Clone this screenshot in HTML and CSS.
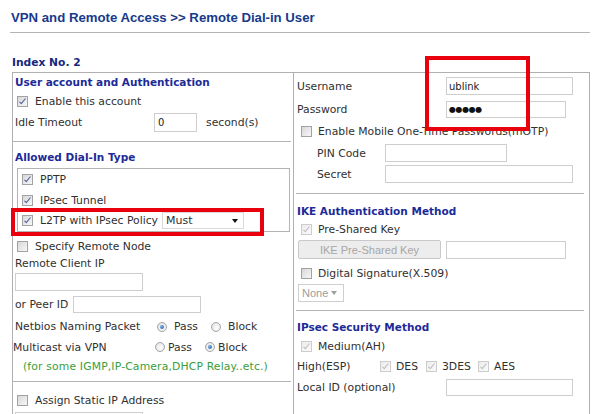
FILE: index.html
```html
<!DOCTYPE html>
<html lang="en">
<head>
    <meta charset="UTF-8">
    <title>Remote Dial-in User</title>
    <link rel="stylesheet" href="styles.css">
</head>
<body>
<div class="page">
    <h1 class="title">VPN and Remote Access &gt;&gt; Remote Dial-in User</h1>
    <div class="index">Index No. 2</div>

    <div class="panel">
        <div class="col-left">
            <div class="sec sec-account">
                <div class="head">User account and Authentication</div>
                <div class="row r-enable"><span class="cb on"></span>Enable this account</div>
                <div class="row r-idle">
                    <span class="lbl w-idle">Idle Timeout</span>
                    <span class="field f-idle">0</span>
                    <span class="unit">second(s)</span>
                </div>
            </div>

            <div class="sec sec-dial">
                <div class="head h-dial">Allowed Dial-In Type</div>
                <div class="typebox">
                    <div class="row tb-row tb-1"><span class="cb on"></span>PPTP</div>
                    <div class="row tb-row tb-2"><span class="cb on"></span>IPsec Tunnel</div>
                    <div class="row tb-row tb-3">
                        <span class="cb on"></span>L2TP with IPsec Policy
                        <span class="select s-must">Must</span>
                    </div>
                </div>
                <div class="row r-specify"><span class="cb"></span>Specify Remote Node</div>
                <div class="row r-label">Remote Client IP</div>
                <div class="row r-client"><span class="field f-client"></span></div>
                <div class="row r-peer">
                    <span class="lbl w-peer">or Peer ID</span>
                    <span class="field f-peer"></span>
                </div>
                <div class="row r-netbios">
                    <span class="lbl w-radio">Netbios Naming Packet</span>
                    <span class="opt opt-wide o-n1"><span class="rd on"></span>Pass</span>
                    <span class="opt opt-wide"><span class="rd"></span>Block</span>
                </div>
                <div class="row r-multi">
                    <span class="lbl w-radio">Multicast via VPN</span>
                    <span class="opt opt-tight o-m1"><span class="rd"></span>Pass</span>
                    <span class="opt opt-tight"><span class="rd on"></span>Block</span>
                </div>
                <div class="row r-note">(for some IGMP,IP-Camera,DHCP Relay..etc.)</div>
            </div>

            <div class="sec sec-static">
                <div class="row r-assign"><span class="cb"></span>Assign Static IP Address</div>
                <div class="row r-static"><span class="field f-client"></span></div>
            </div>
        </div>

        <div class="col-right">
            <div class="rsec rsec-user">
                <div class="row r-user">
                    <span class="lbl w-right">Username</span>
                    <span class="field f-user">ublink</span>
                </div>
                <div class="row r-pass">
                    <span class="lbl w-right">Password</span>
                    <span class="field f-pass"><span class="dots">●●●●●</span></span>
                </div>
                <div class="row r-otp"><span class="cb"></span>Enable Mobile One-Time Passwords(mOTP)</div>
                <div class="row r-pin">
                    <span class="lbl w-pin">PIN Code</span>
                    <span class="field f-pin"></span>
                </div>
                <div class="row r-secret">
                    <span class="lbl w-pin">Secret</span>
                    <span class="field f-secret"></span>
                </div>
            </div>

            <div class="rsec rsec-ike">
                <div class="head">IKE Authentication Method</div>
                <div class="row r-psk"><span class="cb on off"></span>Pre-Shared Key</div>
                <div class="row r-btn">
                    <span class="btn">IKE Pre-Shared Key</span>
                    <span class="field f-key"></span>
                </div>
                <div class="row r-digital"><span class="cb"></span>Digital Signature(X.509)</div>
                <div class="row r-none"><span class="select s-none">None</span></div>
            </div>

            <div class="rsec rsec-ipsec">
                <div class="head">IPsec Security Method</div>
                <div class="row r-medium"><span class="cb on off"></span>Medium(AH)</div>
                <div class="row r-high">
                    <span class="lbl w-high">High(ESP)</span>
                    <span class="esp esp-1"><span class="cb on off"></span>DES</span>
                    <span class="esp esp-2"><span class="cb on off"></span>3DES</span>
                    <span class="esp"><span class="cb on off"></span>AES</span>
                </div>
                <div class="row r-local">
                    <span class="lbl w-right">Local ID (optional)</span>
                    <span class="field f-local"></span>
                </div>
            </div>
        </div>
    </div>

    <!-- red annotation frames drawn over the form -->
    <div class="mark mark-l2tp"></div>
    <div class="mark mark-user"></div>
</div>
</body>
</html>
```

FILE: styles.css
```css
body {
    margin: 0;
    background: #fff;
    font-family: "DejaVu Sans", Verdana, sans-serif;
    font-size: 10.8px;
    color: #303030;
}
.page {
    position: relative;
    width: 600px;
    height: 414px;
    overflow: hidden;
}
.title {
    margin: 10px 0 0 10px;
    padding: 0 0 6px 1px;
    width: 579px;
    font: bold 13.2px/16px "Liberation Sans", Arial, sans-serif;
    color: #173a8c;
    border-bottom: 1px solid #b4b4b4;
}
.index {
    margin: 23px 0 0 12px;
    height: 16px;
    font: bold 10.7px/14px "DejaVu Sans", Verdana, sans-serif;
    color: #15287e;
}
.panel {
    margin-left: 12px;
    width: 576px;
    height: 400px;
    display: grid;
    grid-template-columns: 280px 296px;
    border: 1px solid #b0b0b0;
    border-bottom: none;
}
.col-right {
    border-left: 1px solid #b0b0b0;
}

/* generic rows */
.row {
    display: flex;
    align-items: center;
    height: 20px;
    white-space: nowrap;
}
.head {
    display: flex;
    align-items: center;
    height: 18px;
    padding-left: 2px;
    font: bold 10.5px "DejaVu Sans", Verdana, sans-serif;
    color: #1c2a98;
    white-space: nowrap;
}
.lbl { flex: none; }

/* form controls */
.field {
    box-sizing: border-box;
    display: flex;
    align-items: center;
    flex: none;
    height: 18px;
    padding-left: 2px;
    border: 1px solid #cecece;
    background: #fff;
    font-size: 10px;
    color: #222;
}
.cb {
    position: relative;
    box-sizing: border-box;
    flex: none;
    width: 11px;
    height: 11px;
    margin-right: 7px;
    border: 1px solid #a2a2a2;
    background: linear-gradient(135deg, #d8d8d8, #f7f7f7);
}
.cb.on::after {
    content: "";
    position: absolute;
    left: 3px;
    top: 0px;
    width: 2px;
    height: 6px;
    border: solid #4a5d98;
    border-width: 0 1.5px 1.5px 0;
    transform: rotate(40deg);
}
.cb.off {
    border-color: #cdcdcd;
    background: linear-gradient(135deg, #ececec, #fafafa);
}
.cb.off::after {
    border-color: #bdbdbd;
}
.rd {
    position: relative;
    box-sizing: border-box;
    flex: none;
    width: 10px;
    height: 10px;
    border-radius: 50%;
    border: 1px solid #a4a4a4;
    background: radial-gradient(circle at 60% 60%, #fff, #dcdcdc);
}
.rd.on::after {
    content: "";
    position: absolute;
    left: 2px;
    top: 2px;
    width: 4px;
    height: 4px;
    border-radius: 50%;
    background: radial-gradient(circle at 35% 35%, #7fb2e6, #15589f);
}
.select {
    position: relative;
    box-sizing: border-box;
    display: flex;
    align-items: center;
    flex: none;
    height: 17px;
    padding-left: 3px;
    border: 1px solid #dadada;
    background: #fff;
}
.select::after {
    content: "";
    position: absolute;
    top: 6px;
    border-left: 3px solid transparent;
    border-right: 3px solid transparent;
    border-top: 4px solid #111;
}
.btn {
    box-sizing: border-box;
    display: flex;
    align-items: center;
    justify-content: center;
    flex: none;
    width: 143px;
    height: 19px;
    margin-right: 5px;
    border: 1px solid #c9c9c9;
    border-radius: 2px;
    background: #ededed;
    font: 11px "Liberation Sans", Arial, sans-serif;
    color: #a6a6a6;
}

/* left column */
.sec {
    margin-right: 2px;
}
.sec-account {
    padding-bottom: 8px;
    border-bottom: 1px solid #b4b4b4;
}
.r-enable { padding-left: 4px; }
.r-idle { height: 22px; padding-left: 2px; }
.w-idle { width: 139px; }
.f-idle { width: 43px; height: 19px; padding-left: 3px; }
.unit { margin-left: 9px; }

.sec-dial {
    padding-bottom: 6px;
    border-bottom: 1px solid #b4b4b4;
}
.h-dial { height: 22px; padding-top: 4px; }
.typebox {
    margin: 0 1px 0 4px;
    border: 1px solid #b4b4b4;
}
.tb-row { padding-left: 4px; }
.tb-1, .tb-3 { height: 21px; }
.s-must {
    width: 82px;
    margin-left: 4px;
    font-size: 11px;
}
.s-must::after { right: 5px; }
.r-specify { margin-top: 4px; padding-left: 4px; }
.r-label { height: 15px; padding-left: 2px; }
.r-client { height: 22px; padding-left: 2px; }
.f-client { width: 128px; }
.r-peer { height: 23px; padding-left: 2px; }
.w-peer { width: 58px; }
.f-peer { width: 128px; height: 17px; }
.r-netbios { height: 21px; padding-left: 2px; }
.w-radio { width: 142px; }
.opt { display: flex; align-items: center; }
.opt-wide .rd { margin-right: 7px; }
.opt-tight .rd { margin-right: 3px; }
.o-n1 { width: 54px; }
.o-m1 { width: 50px; }
.r-note {
    height: 18px;
    padding-left: 10px;
    color: #3a9e3a;
    letter-spacing: 0.15px;
}
.sec-static { padding-top: 8px; }
.r-assign { padding-left: 4px; }
.r-static { height: 22px; padding-left: 2px; }

/* right column */
.rsec {
    margin: 0 5px 0 2px;
}
.rsec .row { padding-left: 1px; }
.rsec .head { padding-left: 1px; height: 20px; }
.rsec-user {
    padding: 3px 0 9px;
    border-bottom: 1px solid #b4b4b4;
}
.w-right { width: 149px; }
.f-user { width: 127px; }
.r-pass { margin-top: 3px; }
.f-pass { width: 120px; height: 17px; }
.dots {
    font-size: 8px;
    letter-spacing: -0.4px;
    color: #111;
}
.rsec .r-otp { margin-top: 2px; padding-left: 5px; }
.r-otp .cb, .r-psk .cb, .r-digital .cb, .r-medium .cb { margin-right: 6px; }
.rsec .r-pin { margin-top: 2px; padding-left: 21px; }
.rsec .r-secret { margin-top: 1px; padding-left: 21px; }
.w-pin { width: 68px; }
.f-pin { width: 122px; }
.f-secret { width: 188px; }

.rsec-ike {
    padding: 7px 0 7px;
    border-bottom: 1px solid #b4b4b4;
}
.rsec .r-psk { height: 17px; padding-left: 5px; }
.rsec .r-btn { margin-top: 1px; height: 21px; padding-left: 2px; }
.f-key { width: 120px; }
.rsec .r-digital { margin-top: 3px; padding-left: 5px; }
.rsec .r-none { padding-left: 2px; }
.s-none {
    width: 46px;
    height: 18px;
    border-color: #cfcfcf;
    font: 11px "Liberation Sans", Arial, sans-serif;
    color: #9d9d9d;
}
.s-none::after {
    right: 6px;
    border-top-color: #9d9d9d;
}

.rsec-ipsec { padding-top: 6px; }
.rsec .r-medium { height: 19px; padding-left: 5px; }
.w-high { width: 83px; }
.esp { display: flex; align-items: center; }
.esp .cb { margin-right: 5px; }
.esp-1 { width: 46px; }
.esp-2 { width: 52px; }
.rsec .r-local { margin-top: 1px; }
.f-local { width: 127px; height: 17px; }

/* red annotation frames */
.mark {
    position: absolute;
    border: 4px solid #e8000c;
}
.mark-l2tp {
    left: 11px;
    top: 208px;
    width: 245px;
    height: 20px;
}
.mark-user {
    left: 425px;
    top: 56px;
    width: 97px;
    height: 67px;
}
```
